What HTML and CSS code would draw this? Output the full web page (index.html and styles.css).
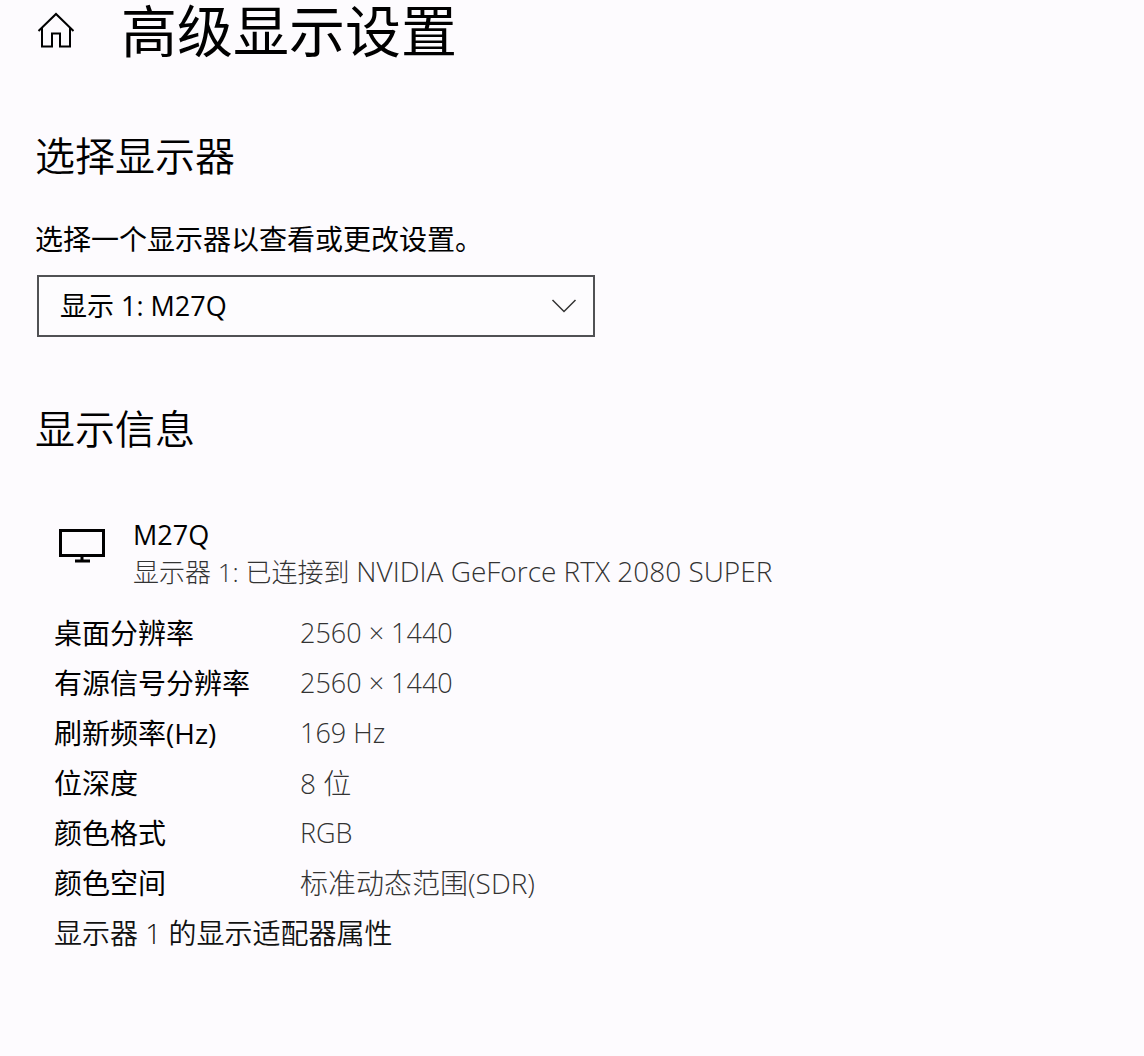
FILE: index.html
```html
<!DOCTYPE html>
<html lang="zh-CN">
<head>
<meta charset="utf-8">
<meta name="viewport" content="width=device-width, initial-scale=1">
<title>高级显示设置</title>
<link rel="stylesheet" href="styles.css">
</head>
<body>
<main class="page">
  <header class="page-header">
    <svg class="home-icon" viewBox="0 0 38 38" aria-hidden="true">
      <path d="M1.500 20 19 3 36.500 20M5 17V35.500H15V22.500H23V35.500H33V17"/>
    </svg>
    <h1 class="page-title">高级显示设置</h1>
  </header>

  <section class="picker">
    <h2 class="section-title">选择显示器</h2>
    <label class="picker-label" for="display">选择一个显示器以查看或更改设置。</label>
    <div class="select-box">
      <select class="select" id="display">
        <option>显示 1: M27Q</option>
      </select>
      <svg class="chevron" viewBox="0 0 26 16" aria-hidden="true"><path d="M1.500 2 13 13.500 24.500 2"/></svg>
    </div>
  </section>

  <section class="info">
    <h2 class="section-title">显示信息</h2>
    <div class="monitor">
      <svg class="monitor-icon" viewBox="0 0 46 36" aria-hidden="true">
        <path d="M1.500 3.500H44.500V28.500H1.500ZM23 28.500V34M16 34H31"/>
      </svg>
      <div class="monitor-text">
        <h3 class="monitor-name">M27Q</h3>
        <p class="monitor-detail">显示器 1: 已连接到 <span class="adapter-name">NVIDIA GeForce RTX 2080 SUPER</span></p>
      </div>
    </div>
    <dl class="specs">
      <dt>桌面分辨率</dt><dd class="latin">2560 × 1440</dd>
      <dt>有源信号分辨率</dt><dd class="latin">2560 × 1440</dd>
      <dt>刷新频率(Hz)</dt><dd class="latin">169 Hz</dd>
      <dt>位深度</dt><dd>8 位</dd>
      <dt>颜色格式</dt><dd class="latin">RGB</dd>
      <dt>颜色空间</dt><dd>标准动态范围(SDR)</dd>
    </dl>
    <a class="adapter-link" href="#">显示器 1 的显示适配器属性</a>
  </section>
</main>
</body>
</html>
```
FILE: styles.css
```css
* {
  box-sizing: border-box;
}

body {
  margin: 0;
  background: #fdfbfe;
  color: #000;
  font: 400 28px/50px "Open Sans", "Noto Sans CJK SC", sans-serif;
}

h1, h2, h3, p, dl, dd {
  margin: 0;
  font-weight: 400;
}

.page {
  padding: 0 35px 48px;
}

.page-header {
  display: flex;
  align-items: center;
  gap: 46px;
  padding-left: 2px;
}

.home-icon {
  flex: none;
  width: 38px;
  height: 38px;
  fill: none;
  stroke: #000;
  stroke-width: 2;
}

.page-title {
  font-size: 56px;
  line-height: 60px;
}

.section-title {
  font-size: 40px;
  font-weight: 350;
  line-height: 60px;
}

.picker {
  display: flex;
  flex-direction: column;
  padding-top: 66px;
}

.picker-label {
  margin-top: 28px;
}

.select-box {
  position: relative;
  max-width: 558px;
  margin: 11px 0 0 2px;
}

.select {
  display: block;
  width: 100%;
  height: 62px;
  padding: 0 21px;
  border: 2px solid #505154;
  border-radius: 0;
  appearance: none;
  background: #fdfcfe;
  color: #000;
  font: inherit;
  font-size: 27px;
}

.chevron {
  position: absolute;
  top: 23px;
  right: 18px;
  width: 26px;
  height: 16px;
  fill: none;
  stroke: #333;
  stroke-width: 1.500;
  pointer-events: none;
}

.info {
  padding-top: 62px;
}

.monitor {
  display: flex;
  gap: 28px;
  padding: 58px 0 0 24px;
}

.monitor-icon {
  flex: none;
  width: 46px;
  height: 36px;
  margin-top: 10px;
  fill: none;
  stroke: #000;
  stroke-width: 3;
}

.monitor-name {
  font-size: 27px;
  line-height: 36px;
}

.monitor-detail {
  color: #333;
  font-size: 26px;
  font-weight: 300;
  line-height: 36px;
}

.adapter-name {
  font-size: 28px;
}

.specs {
  display: grid;
  grid-template-columns: 246px 1fr;
  padding: 18px 0 0 19px;
}

.specs dd {
  color: #333;
  font-weight: 300;
}

.specs .latin {
  font-size: 27px;
}

.adapter-link {
  display: inline-block;
  padding-left: 19px;
  color: #111;
  font-weight: 350;
  text-decoration: none;
}
```
